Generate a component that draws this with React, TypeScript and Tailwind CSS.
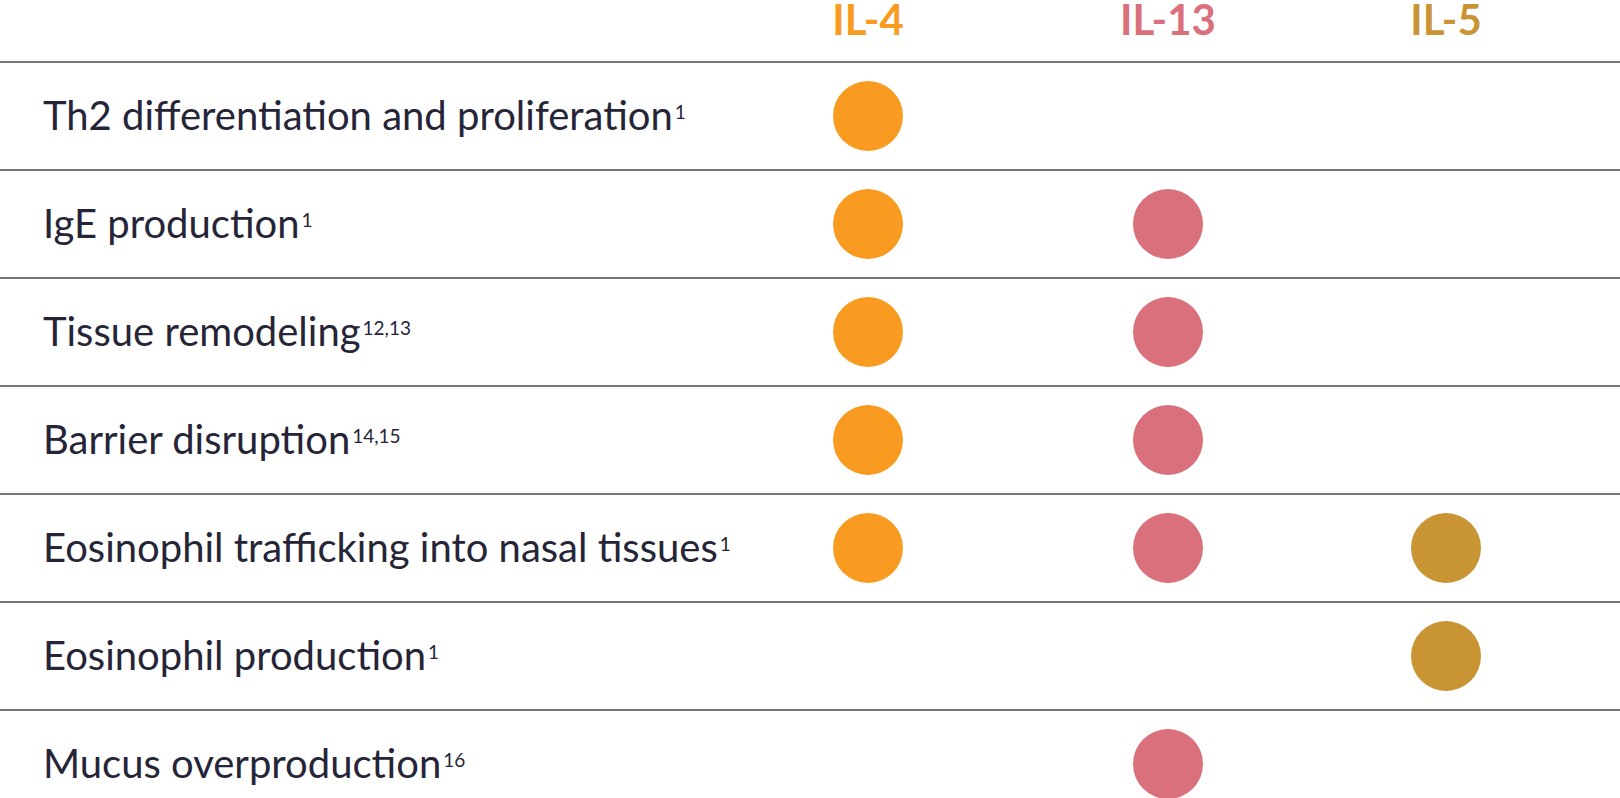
const rows: { label: string; sup: string; il4?: boolean; il13?: boolean; il5?: boolean }[] = [
  { label: "Th2 differentiation and proliferation", sup: "1", il4: true },
  { label: "IgE production", sup: "1", il4: true, il13: true },
  { label: "Tissue remodeling", sup: "12,13", il4: true, il13: true },
  { label: "Barrier disruption", sup: "14,15", il4: true, il13: true },
  { label: "Eosinophil trafficking into nasal tissues", sup: "1", il4: true, il13: true, il5: true },
  { label: "Eosinophil production", sup: "1", il5: true },
  { label: "Mucus overproduction", sup: "16", il13: true },
];

function Dot({ on, color }: { on?: boolean; color: string }) {
  if (!on) return null;
  return <div className={`size-[70px] rounded-full ${color}`} />;
}

export default function App() {
  return (
    <div className="w-[1620px] h-[798px] overflow-hidden bg-white font-['Lato','Noto_Sans',sans-serif] text-[#262538]">
      {/* Header */}
      <div className="flex h-[61px] pt-[1px] font-bold text-[42px] leading-[36px]">
        <div className="w-[718px]" />
        <div className="w-[300px] text-center text-[#f89b20]">IL-4</div>
        <div className="w-[300px] text-center text-[#d9707c]">IL-13</div>
        <div className="w-[256px] text-center text-[#c99434]">IL-5</div>
      </div>

      {rows.map((r) => (
        <div key={r.label} className="flex h-[108px] items-center border-t-2 border-[#76767e]">
          <div className="w-[718px] pl-[43px] -mt-[3px] text-[40px] leading-none whitespace-nowrap">
            {r.label}
            <sup className="ml-[2px] text-[19px] -top-[11px]">{r.sup}</sup>
          </div>
          <div className="w-[300px] flex justify-center">
            <Dot on={r.il4} color="bg-[#f89b20]" />
          </div>
          <div className="w-[300px] flex justify-center">
            <Dot on={r.il13} color="bg-[#d9707c]" />
          </div>
          <div className="w-[256px] flex justify-center">
            <Dot on={r.il5} color="bg-[#c99434]" />
          </div>
        </div>
      ))}
    </div>
  );
}
